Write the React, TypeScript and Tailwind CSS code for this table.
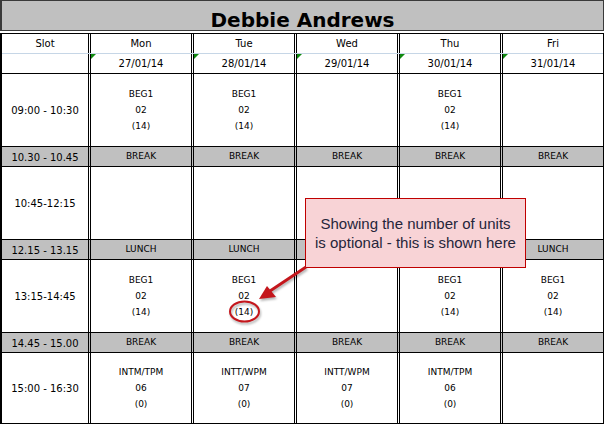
import React from 'react'

type Cell = string[] | null

const days = ['Mon', 'Tue', 'Wed', 'Thu', 'Fri']
const dates = ['27/01/14', '28/01/14', '29/01/14', '30/01/14', '31/01/14']

const beg: Cell = ['BEG1', '02', '(14)']
const intm: Cell = ['INTM/TPM', '06', '(0)']
const intt: Cell = ['INTT/WPM', '07', '(0)']

const rows: { slot: string; kind: 'class' | 'break'; label?: string; cells?: Cell[]; h: string }[] = [
  { slot: '09:00 - 10:30', kind: 'class', cells: [beg, beg, null, beg, null], h: 'h-[73px]' },
  { slot: '10.30 - 10.45', kind: 'break', label: 'BREAK', h: 'h-[20px]' },
  { slot: '10:45-12:15', kind: 'class', cells: [null, null, null, null, null], h: 'h-[73px]' },
  { slot: '12.15 - 13.15', kind: 'break', label: 'LUNCH', h: 'h-[20px]' },
  { slot: '13:15-14:45', kind: 'class', cells: [beg, beg, null, beg, beg], h: 'h-[73px]' },
  { slot: '14.45 - 15.00', kind: 'break', label: 'BREAK', h: 'h-[20px]' },
  { slot: '15:00 - 16:30', kind: 'class', cells: [intm, intt, intt, intm, null], h: 'h-[71px]' },
]

const gridCols = 'grid grid-cols-[86px_repeat(5,103px)]'
const dayCell = 'border-l-[3px] border-double border-black'

function Row({ row }: { row: (typeof rows)[number] }) {
  const isBreak = row.kind === 'break'
  return (
    <div className={`${gridCols} ${row.h} border-b border-black ${isBreak ? 'bg-[#c0c0c0]' : 'bg-white'}`}>
      <div className="flex items-center justify-center text-[10px] pt-px">{row.slot}</div>
      {days.map((d, i) => {
        if (isBreak)
          return (
            <div key={d} className={`${dayCell} flex items-center justify-center text-[9px] pt-px`}>
              {row.label}
            </div>
          )
        const c = row.cells?.[i]
        return (
          <div key={d} className={`${dayCell} flex flex-col items-center justify-center text-[9px] leading-4`}>
            {c && c.map((t, j) => <div key={j}>{t}</div>)}
          </div>
        )
      })}
    </div>
  )
}

export default function App() {
  return (
    <div className="relative w-[604px] h-[425px] overflow-hidden bg-white text-black font-['DejaVu_Sans',sans-serif]">
      <div className="h-[31px] bg-[#c0c0c0] border-t border-b border-r border-l-2 border-[#3a3a3a] flex justify-center pt-[9px]">
        <span className="text-[20px] leading-[20px] font-bold">Debbie Andrews</span>
      </div>

      <div className="mt-[2px] w-[604px] border-t border-black border-l-2 border-r">
        <div className={`${gridCols} h-[20px] border-b border-[#c6d6e6]`}>
          <div className="flex items-center justify-center text-[10px]">Slot</div>
          {days.map((d) => (
            <div key={d} className={`${dayCell} flex items-center justify-center text-[10px]`}>
              {d}
            </div>
          ))}
        </div>
        <div className={`${gridCols} h-[20px] border-b border-black`}>
          <div />
          {dates.map((d) => (
            <div key={d} className={`${dayCell} relative flex items-center justify-center text-[10px]`}>
              <span className="absolute left-0 top-0 w-0 h-0 border-t-[5px] border-t-[#108a10] border-r-[5px] border-r-transparent" />
              {d}
            </div>
          ))}
        </div>
        {rows.map((r, i) => (
          <Row key={i} row={r} />
        ))}
      </div>

      {/* callout */}
      <div className="absolute left-[305px] top-[198px] w-[221px] h-[70px] border border-[#c00000] bg-[#f8d3d6] flex flex-col items-center justify-center text-[15px] leading-[19px] text-[#25253a] font-['Liberation_Sans',Arial,sans-serif]">
        <div>Showing the number of units</div>
        <div>is optional - this is shown here</div>
      </div>

      <svg
        className="absolute left-0 top-0 pointer-events-none drop-shadow-[1px_2px_1px_rgba(0,0,0,0.3)]"
        width="604"
        height="425"
        viewBox="0 0 604 425"
      >
        <line x1="306" y1="267" x2="270" y2="291" stroke="#c4161c" strokeWidth="3" />
        <polygon points="259,299 267,286 276,297" fill="#c4161c" />
        <ellipse cx="244.5" cy="311.5" rx="14.5" ry="10" fill="none" stroke="#c4161c" strokeWidth="2" />
      </svg>
    </div>
  )
}
